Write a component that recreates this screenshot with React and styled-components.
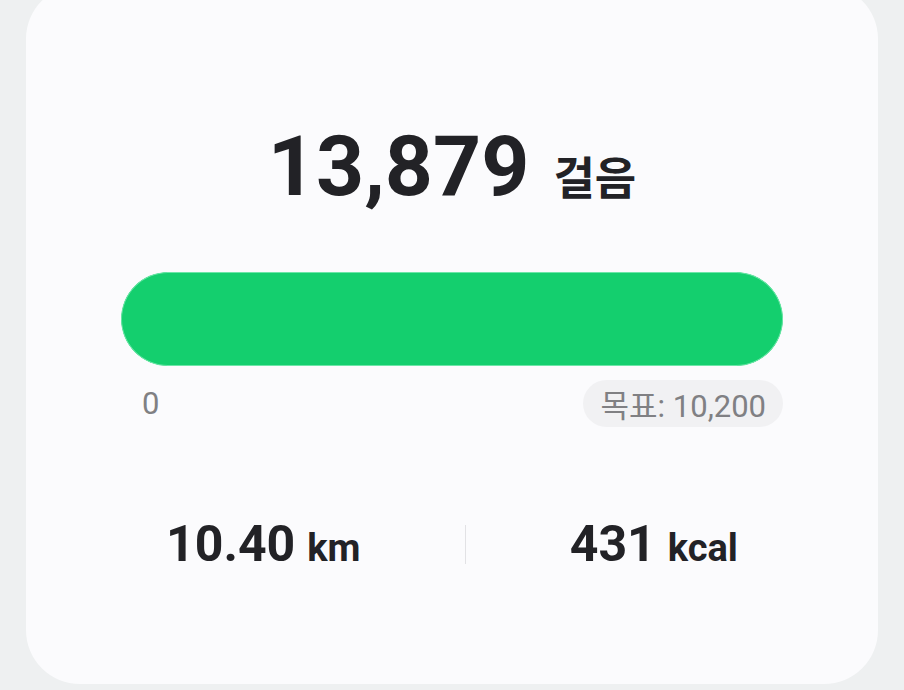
import React from 'react'
import styled, { createGlobalStyle } from 'styled-components'

const GlobalStyle = createGlobalStyle`
  html, body {
    margin: 0;
    padding: 0;
    background: #eef0f1;
    overflow: hidden;
  }
  body {
    font-family: Roboto, "Noto Sans CJK KR", sans-serif;
    color: #222226;
  }
`

const Page = styled.div`
  width: 904px;
  height: 690px;
  padding: 0 26px;
  box-sizing: border-box;
  display: flex;
  flex-flow: column;
`

const Card = styled.section`
  margin-top: -15px;
  height: 699px;
  flex: none;
  box-sizing: border-box;
  padding: 140px 95px 0;
  background: #fbfbfd;
  border-radius: 54px;
  display: flex;
  flex-flow: column;
  align-items: center;
`

const StepLine = styled.div`
  display: flex;
  align-items: baseline;
  gap: 24px;
  height: 84px;
`

const StepCount = styled.span`
  font-family: Roboto, sans-serif;
  font-size: 84px;
  line-height: 84px;
  font-weight: 700;
`

const StepUnit = styled.span`
  font-family: "Noto Sans CJK KR", sans-serif;
  font-size: 45px;
  font-weight: 700;
  line-height: 1;
`

const Track = styled.div`
  margin-top: 63px;
  width: 100%;
  height: 94px;
  border-radius: 47px;
  background: #e6f8ee;
  overflow: hidden;
`

const Fill = styled.div`
  height: 100%;
  border-radius: 47px;
  background: #14cf6e;
  box-shadow: inset 0 0 0 1px #6de6a8;
`

const Scale = styled.div`
  margin-top: 14px;
  width: 100%;
  display: flex;
  justify-content: space-between;
  align-items: center;
`

const ScaleLabel = styled.span`
  display: flex;
  align-items: center;
  height: 47px;
  padding: 0 17px 0 ${p => (p.$goal ? '18px' : '21px')};
  border-radius: 24px;
  background: ${p => (p.$goal ? '#f1f1f3' : 'transparent')};
  color: #808083;
  font-size: 31px;
  font-weight: 400;
  font-family: Roboto, "Noto Sans CJK KR", sans-serif;
`

const Stats = styled.div`
  margin: 92px -7px 0;
  align-self: stretch;
  display: flex;
  justify-content: space-around;
  align-items: center;
`

const Stat = styled.div`
  display: flex;
  align-items: baseline;
  gap: 12px;
`

const StatValue = styled.span`
  font-size: 50px;
  line-height: 50px;
  font-weight: 700;
`

const StatUnit = styled.span`
  font-size: 38px;
  font-weight: 700;
`

const Divider = styled.div`
  width: 1px;
  height: 39px;
  background: #e2e2e5;
`

const steps = 13879
const goal = 10200

export default function App() {
  const pct = Math.min(100, (steps / goal) * 100)
  return (
    <>
      <GlobalStyle />
      <Page>
        <Card>
          <StepLine>
            <StepCount>{steps.toLocaleString('en-US')}</StepCount>
            <StepUnit>걸음</StepUnit>
          </StepLine>
          <Track>
            <Fill style={{ width: `${pct}%` }} />
          </Track>
          <Scale>
            <ScaleLabel>0</ScaleLabel>
            <ScaleLabel $goal>목표: {goal.toLocaleString('en-US')}</ScaleLabel>
          </Scale>
          <Stats>
            <Stat>
              <StatValue>10.40</StatValue>
              <StatUnit>km</StatUnit>
            </Stat>
            <Divider />
            <Stat>
              <StatValue>431</StatValue>
              <StatUnit>kcal</StatUnit>
            </Stat>
          </Stats>
        </Card>
      </Page>
    </>
  )
}
